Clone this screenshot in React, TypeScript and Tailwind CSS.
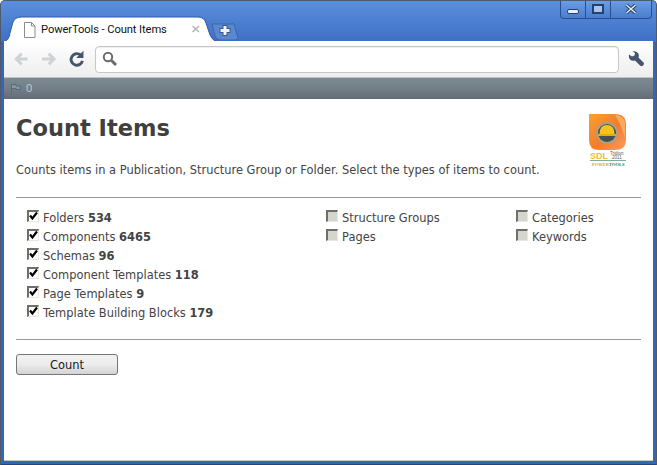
import React from "react";

const left = [
  ["Folders", "534"],
  ["Components", "6465"],
  ["Schemas", "96"],
  ["Component Templates", "118"],
  ["Page Templates", "9"],
  ["Template Building Blocks", "179"],
];

function Check({ checked }: { checked?: boolean }) {
  return (
    <span className={`relative mt-[-6px] mr-[4px] block h-[12px] w-[12px] shrink-0 border-t-2 border-l-2 border-r border-b border-t-[#6f6f68] border-l-[#6f6f68] border-r-[#e8e8e2] border-b-[#e8e8e2] ${checked ? "bg-white" : "bg-[#d4d5cd]"}`}>
      {checked && (
        <svg viewBox="0 0 11 11" className="absolute left-[-1px] top-[-1px] h-[11px] w-[11px]">
          <path d="M2 4.500 L4.400 7.500 L9 1.500" fill="none" stroke="#000" strokeWidth="2.200" />
        </svg>
      )}
    </span>
  );
}

function Row({ label, n, checked }: { label: string; n?: string; checked?: boolean }) {
  return (
    <div className="flex h-[19px] items-center whitespace-nowrap">
      <Check checked={checked} />
      <span>
        {label} {n && <b className="font-bold">{n}</b>}
      </span>
    </div>
  );
}

function Logo() {
  return (
    <svg viewBox="0 0 38 52" className="h-[52px] w-[38px]">
      <defs>
        <linearGradient id="o" x1="0" y1="0" x2="1" y2="1">
          <stop offset="0" stopColor="#f8a030" />
          <stop offset="0.55" stopColor="#f47c2a" />
          <stop offset="1" stopColor="#f89c6a" />
        </linearGradient>
      </defs>
      <path d="M0 0 H26 Q37 0 37 11 V26 Q37 36 26 36 H10 Q0 36 0 26 Z" fill="url(#o)" />
      <path d="M26 1 Q36 1 36 11 V24 Q32 10 26 1 Z" fill="#fbb56a" opacity="0.8" />
      <circle cx="18" cy="19" r="11" fill="#a89f8c" />
      <circle cx="18" cy="19" r="9" fill="#46504e" />
      <path d="M10.500 20 Q10.500 11 18 11 Q25.500 11 25.500 20 Z" fill="#f6c21c" />
      <rect x="9" y="20" width="18" height="2" fill="#e8a915" />
      <text x="1" y="45" fontFamily="'Liberation Sans',sans-serif" fontWeight="700" fontSize="9" fill="#f0c030">SDL</text>
      <text x="21" y="41" fontFamily="'Liberation Sans',sans-serif" fontSize="4.500" fill="#55604f">Tridion</text>
      <text x="23" y="45" fontFamily="'Liberation Sans',sans-serif" fontSize="4.500" fill="#55604f">2011</text>
      <rect x="1" y="46" width="36" height="0.700" fill="#4e8a70" />
      <text x="3" y="51.500" fontFamily="'Liberation Serif',serif" fontWeight="700" fontSize="4.500" fill="#d9a02a">POWER</text>
      <text x="20" y="51.500" fontFamily="'Liberation Serif',serif" fontWeight="700" fontSize="4.500" fill="#2f7a62">TOOLS</text>
    </svg>
  );
}

export default function App() {
  return (
    <div className="flex h-[465px] w-[657px] flex-col overflow-hidden rounded-t-[5px] border border-[#4d5a70] border-b-[#27457d] bg-[#3566b5] pl-[3px] pr-[3px] pb-[3px] font-['DejaVu_Sans',sans-serif]">
      {/* title strip */}
      <div className="relative -mx-[4px] -mb-px h-[41px] shrink-0 bg-gradient-to-b from-[#5b8fdc] to-[#3e6fc4]">
        <div className="absolute right-[5px] top-[-1px] flex h-[19px] w-[92px] overflow-hidden rounded-b-[4px] border border-t-0 border-[#2b4f8e] bg-gradient-to-b from-[#6d9fe4] to-[#4a7dcc]">
          <div className="flex w-[25px] items-center justify-center border-r border-[#2b4f8e]">
            <span className="mt-[4px] block h-[5px] w-[12px] rounded-[2px] border border-[#24406f] bg-[#e9eef6]" />
          </div>
          <div className="flex w-[25px] items-center justify-center border-r border-[#2b4f8e]">
            <span className="block h-[10px] w-[12px] border-2 border-[#24406f] bg-[#a9c4ea]" />
          </div>
          <div className="flex flex-1 items-center justify-center">
            <svg viewBox="0 0 12 10" className="h-[10px] w-[12px]">
              <path d="M1.500 1 L10.500 9 M10.500 1 L1.500 9" stroke="#24406f" strokeWidth="3.500" />
              <path d="M1.500 1 L10.500 9 M10.500 1 L1.500 9" stroke="#e4ecf8" strokeWidth="1.500" />
            </svg>
          </div>
        </div>
        <svg viewBox="0 0 240 41" className="absolute left-0 top-0 h-[41px] w-[240px]">
          <path d="M212 23 H234 L238 37 Q238 39 234 39 H220 Q216 39 215 35 Z" fill="#5b87cf" stroke="#3a66ae" />
          <path d="M3 41 Q9 40 10 32 L13 21 Q15 16 22 16 H198 Q204 16 206 22 L210 34 Q212 39 217 41 Z" fill="#ffffff" stroke="#2f5da8" />
          <path d="M225 24 V35 M219.500 29.500 H230.500" stroke="#38598f" strokeWidth="5" />
          <path d="M225 25 V34 M220.500 29.500 H229.500" stroke="#f0f4fa" strokeWidth="3" />
          <path d="M24.500 21.500 H31.500 L35 25 V36.500 H24.500 Z M31.500 21.500 V25 H35" fill="#fff" stroke="#8c8c8c" />
          <path d="M192.500 25 L199 31 M199 25 L192.500 31" stroke="#b4b4b4" strokeWidth="1.500" />
        </svg>
        <span className="absolute left-[41px] top-[20px] font-['Roboto',sans-serif] text-[11.200px] leading-[17px] tracking-[-0.1px] text-[#111]">
          PowerTools - Count Items
        </span>
      </div>

      {/* toolbar */}
      <div className="relative flex h-[36px] shrink-0 items-center bg-gradient-to-b from-white to-[#eeeeee] pr-[8px]">
        <div className="flex h-full w-[91px] shrink-0 items-center">
          <svg viewBox="0 0 85 20" className="ml-[9px] h-[20px] w-[85px]">
            <path d="M15 10 H4 M9 4.500 L3.500 10 L9 15.500" fill="none" stroke="#cfd2d6" strokeWidth="3.200" />
            <path d="M30 10 H42 M37 4.500 L42.500 10 L37 15.500" fill="none" stroke="#cfd2d6" strokeWidth="3.200" />
            <path d="M70 5.800 A6 6 0 1 0 72 12" fill="none" stroke="#46556e" strokeWidth="3" />
            <path d="M65.500 9 H73 V1.500 Z" fill="#46556e" />
          </svg>
        </div>
        <div className="flex h-[27px] flex-1 items-center rounded-[4px] border border-[#c5c7ca] bg-white pl-[6px] [box-shadow:inset_0_1px_1px_#eee]">
          <svg viewBox="0 0 16 16" className="h-[16px] w-[16px]">
            <circle cx="6" cy="6" r="4.200" fill="none" stroke="#6b6b6b" strokeWidth="2" />
            <path d="M9.500 9.500 L14 14" stroke="#6b6b6b" strokeWidth="3" />
          </svg>
        </div>
        <svg viewBox="0 0 17 17" className="ml-[9px] h-[17px] w-[17px]">
          <path d="M1 3.500 L4 5.500 L6.500 4.500 L7 2 L4.500 0.500 Q8 -0.300 10 2 Q11.500 4.500 10.500 6.500 L15.500 11.500 Q16.500 13 15 14.500 Q13.500 16 12 14.500 L7 9.500 Q4 10.500 2 8.500 Q0.500 6.500 1 3.500 Z" fill="#46556e" />
        </svg>
      </div>

      {/* bookmarks bar */}
      <div className="flex h-[22px] shrink-0 items-center gap-[4px] border-t border-[#bfc3c7] bg-gradient-to-b from-[#7c8a90] via-[#737f88] to-[#646b78] pl-[6px] text-[11px] text-[#c3cbcf]">
        <svg viewBox="0 0 12 12" className="h-[12px] w-[12px]">
          <path d="M1.500 1 V11.500 M1.500 1.500 H6 V3 H10.500 V6.500 H6 V5.500 H1.500" fill="#8497a6" stroke="#5a6a78" />
        </svg>
        <span className="font-['Open_Sans',sans-serif]">0</span>
      </div>

      {/* page */}
      <div className="flex min-h-0 flex-1 flex-col border-b border-[#c9c9c9] bg-white px-[12px] text-[11.450px] leading-[19px] text-[#444]">
        <div className="flex justify-between">
          <div>
            <h1 className="mt-[13px] text-[22.500px] font-bold leading-[32px] text-[#404040]">Count Items</h1>
            <p className="mt-[17px]">Counts items in a Publication, Structure Group or Folder. Select the types of items to count.</p>
          </div>
          <div className="mr-[14px] mt-[15px]">
            <Logo />
          </div>
        </div>

        <div className="mt-[17px] h-px bg-[#9a9a9a]" />

        <div className="mt-[11px] flex pl-[11px]">
          <div className="w-[299px]">
            {left.map(([l, n]) => (
              <Row key={l} label={l} n={n} checked />
            ))}
          </div>
          <div className="w-[190px]">
            <Row label="Structure Groups" />
            <Row label="Pages" />
          </div>
          <div>
            <Row label="Categories" />
            <Row label="Keywords" />
          </div>
        </div>

        <div className="mt-[16px] h-px bg-[#9a9a9a]" />

        <button className="mt-[14px] h-[21px] w-[102px] rounded-[3px] border border-[#74767a] bg-gradient-to-b from-[#f2f2f2] via-[#ececec] to-[#d3d3d3] pt-[2px] text-[11.450px] leading-[17px] text-[#1a1a1a]">
          Count
        </button>
      </div>
    </div>
  );
}
